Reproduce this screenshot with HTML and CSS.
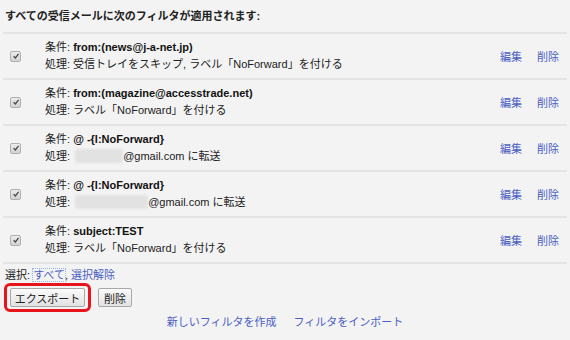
FILE: index.html
```html
<!DOCTYPE html>
<html lang="ja">
<head>
  <meta charset="UTF-8" />
  <title>フィルタ</title>
  <link rel="stylesheet" href="styles.css">
</head>
<body>

  <div class="heading">すべての受信メールに次のフィルタが適用されます:</div>

  <div class="filters">
    <div class="filter">
      <div class="check"><span class="box"><svg viewBox="0 0 10 10" width="8" height="8"><path d="M2 5.2 L4.2 7.4 L8.2 2.4" fill="none" stroke="#444" stroke-width="1.6"/></svg></span></div>
      <div class="desc">
        <div>条件: <b>from:(news@j-a-net.jp)</b></div>
        <div>処理: 受信トレイをスキップ, ラベル「NoForward」を付ける</div>
      </div>
      <div class="actions"><a>編集</a><a>削除</a></div>
    </div>
    <div class="filter">
      <div class="check"><span class="box"><svg viewBox="0 0 10 10" width="8" height="8"><path d="M2 5.2 L4.2 7.4 L8.2 2.4" fill="none" stroke="#444" stroke-width="1.6"/></svg></span></div>
      <div class="desc">
        <div>条件: <b>from:(magazine@accesstrade.net)</b></div>
        <div>処理: ラベル「NoForward」を付ける</div>
      </div>
      <div class="actions"><a>編集</a><a>削除</a></div>
    </div>
    <div class="filter">
      <div class="check"><span class="box"><svg viewBox="0 0 10 10" width="8" height="8"><path d="M2 5.2 L4.2 7.4 L8.2 2.4" fill="none" stroke="#444" stroke-width="1.6"/></svg></span></div>
      <div class="desc">
        <div>条件: <b>@ -{l:NoForward}</b></div>
        <div>処理: <span class="blur short"></span>@gmail.com に転送</div>
      </div>
      <div class="actions"><a>編集</a><a>削除</a></div>
    </div>
    <div class="filter">
      <div class="check"><span class="box"><svg viewBox="0 0 10 10" width="8" height="8"><path d="M2 5.2 L4.2 7.4 L8.2 2.4" fill="none" stroke="#444" stroke-width="1.6"/></svg></span></div>
      <div class="desc">
        <div>条件: <b>@ -{l:NoForward}</b></div>
        <div>処理: <span class="blur long"></span>@gmail.com に転送</div>
      </div>
      <div class="actions"><a>編集</a><a>削除</a></div>
    </div>
    <div class="filter">
      <div class="check"><span class="box"><svg viewBox="0 0 10 10" width="8" height="8"><path d="M2 5.2 L4.2 7.4 L8.2 2.4" fill="none" stroke="#444" stroke-width="1.6"/></svg></span></div>
      <div class="desc">
        <div>条件: <b>subject:TEST</b></div>
        <div>処理: ラベル「NoForward」を付ける</div>
      </div>
      <div class="actions"><a>編集</a><a>削除</a></div>
    </div>
  </div>

  <div class="select">選択: <a class="focused">すべて</a>, <a>選択解除</a></div>

  <div class="buttons">
    <span class="highlight"><button>エクスポート</button></span>
    <button>削除</button>
  </div>

  <div class="links">
    <a>新しいフィルタを作成</a>
    <a>フィルタをインポート</a>
  </div>

</body>
</html>
```

FILE: styles.css
```css
body {
  margin: 0;
  background: #f3f3f3;
  color: #222;
  font-family: "Liberation Sans", "Noto Sans CJK JP", sans-serif;
  font-size: 11px;
}

a {
  color: #4a5ec4;
  cursor: pointer;
}

.heading {
  font-weight: bold;
  font-size: 11px;
  padding: 8px 5px 8px;
  line-height: 16px;
}

.filters {
  margin: 0 3px;
  border-top: 2px solid #e4e4e4;
}

.filter {
  display: flex;
  align-items: center;
  height: 44px;
  border-bottom: 2px solid #e4e4e4;
}

.check {
  width: 42px;
  padding-left: 7px;
  box-sizing: border-box;
}

.box {
  display: flex;
  align-items: center;
  justify-content: center;
  width: 9px;
  height: 9px;
  border: 1px solid #b0b0b0;
  border-radius: 2px;
  background: linear-gradient(#ececec, #d2d2d2);
}

.desc {
  flex: 1;
  line-height: 17px;
}

.desc b {
  color: #111;
}

.blur {
  display: inline-block;
  height: 14px;
  vertical-align: -3px;
  background: #e2e2e2;
  border-radius: 3px;
  filter: blur(1px);
  margin-left: 2px;
}

.blur.short {
  width: 48px;
}

.blur.long {
  width: 73px;
}

.actions {
  display: flex;
  gap: 15px;
  padding-right: 8px;
}

.select {
  padding: 4px 5px 0;
  line-height: 15px;
}

.focused {
  outline: 1px dotted #9ab4e8;
}

.buttons {
  display: flex;
  align-items: center;
  gap: 7px;
  padding: 0 4px;
}

.highlight {
  display: inline-block;
  border: 3px solid #e8141c;
  border-radius: 6px;
  padding: 2px 3px;
}

button {
  font-family: "Liberation Sans", "Noto Sans CJK JP", sans-serif;
  font-size: 11px;
  color: #222;
  height: 19px;
  padding: 0 5px;
  white-space: nowrap;
  border: 1px solid #a8a8a8;
  border-radius: 2px;
  background: linear-gradient(#fbfbfb, #e2e2e2);
}

.highlight button {
  width: 75px;
  display: block;
  padding: 0;
}

.links {
  display: flex;
  justify-content: center;
  gap: 17px;
  padding-top: 2px;
  line-height: 16px;
}
```
